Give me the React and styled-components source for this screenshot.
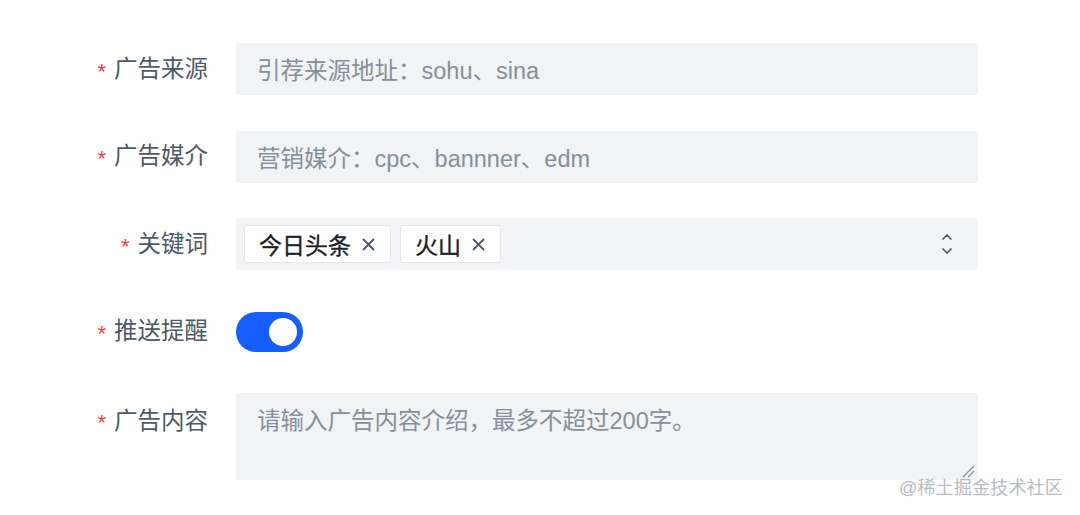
import React from 'react';
import styled, { createGlobalStyle } from 'styled-components';

const GlobalStyle = createGlobalStyle`
  html, body {
    margin: 0;
    padding: 0;
    background: #ffffff;
  }
  body {
    font-family: "Liberation Sans", "Noto Sans CJK SC", sans-serif;
  }
`;

const Page = styled.div`
  position: relative;
  width: 1080px;
  height: 515px;
  overflow: hidden;
  background: #fff;
`;

const Form = styled.form`
  display: grid;
  grid-template-columns: 208px 742px;
  column-gap: 28px;
  row-gap: 35.5px;
  padding-top: 43px;
`;

const Label = styled.label`
  display: flex;
  align-items: ${({ $top }) => ($top ? 'flex-start' : 'center')};
  justify-content: flex-end;
  height: ${({ $top }) => ($top ? 'auto' : '52px')};
  padding-top: ${({ $top }) => ($top ? '12px' : '0')};
  font-size: 23.5px;
  color: #4e5969;
  line-height: 1.4;
`;

const Star = styled.span`
  color: #f53f3f;
  font-size: 22px;
  margin-right: 8px;
  position: relative;
  top: 3px;
`;

const Field = styled.div`
  display: flex;
  align-items: center;
  height: 52px;
  background: #f2f3f5;
  border-radius: 3px;
  padding: 0 21px;
  font-size: 23.5px;
  color: #86909c;
  box-sizing: border-box;
`;

const TagField = styled(Field)`
  padding: 0 24px 0 8px;
  gap: 9px;
`;

const Tag = styled.span`
  display: inline-flex;
  align-items: center;
  gap: 10px;
  height: 38px;
  padding: 0 14px;
  box-sizing: border-box;
  background: #fff;
  border: 1px solid #e5e6eb;
  border-radius: 3px;
  font-size: 23px;
  color: #1d2129;
`;

const TagText = styled.span`
  -webkit-text-stroke: 0.35px #1d2129;
`;

const Close = styled.span`
  display: inline-flex;
  color: #4e5969;
`;

const Arrows = styled.span`
  margin-left: auto;
  display: inline-flex;
  color: #4e5969;
`;

const SwitchRow = styled.div`
  display: flex;
  align-items: center;
  height: 52px;
`;

const Switch = styled.div`
  width: 67px;
  height: 40px;
  border-radius: 20px;
  background: #165dff;
  display: flex;
  align-items: center;
  justify-content: flex-end;
  padding: 0 6px;
  box-sizing: border-box;
`;

const Knob = styled.span`
  width: 28px;
  height: 28px;
  border-radius: 50%;
  background: #fff;
`;

const TextArea = styled.div`
  position: relative;
  height: 87px;
  background: #f2f3f5;
  border-radius: 3px;
  padding: 11px 21px;
  box-sizing: border-box;
  font-size: 23.5px;
  line-height: 1.5;
  color: #86909c;
`;

const Resize = styled.svg`
  position: absolute;
  right: 3px;
  bottom: 2px;
`;

const Watermark = styled.div`
  position: absolute;
  right: 17px;
  bottom: 16px;
  font-size: 18px;
  color: #b8bcc4;
  letter-spacing: 0.2px;
`;

const XIcon = () => (
  <svg width="15" height="15" viewBox="0 0 15 15" fill="none" stroke="currentColor" strokeWidth="1.8">
    <path d="M2 2L13 13M13 2L2 13" />
  </svg>
);

const Required = ({ children, top }) => (
  <Label $top={top}>
    <Star>*</Star>
    {children}
  </Label>
);

const App = () => {
  return (
    <Page>
      <GlobalStyle />
      <Form>
        <Required>广告来源</Required>
        <Field>引荐来源地址：sohu、sina</Field>

        <Required>广告媒介</Required>
        <Field>营销媒介：cpc、bannner、edm</Field>

        <Required>关键词</Required>
        <TagField>
          <Tag>
            <TagText>今日头条</TagText>
            <Close><XIcon /></Close>
          </Tag>
          <Tag>
            <TagText>火山</TagText>
            <Close><XIcon /></Close>
          </Tag>
          <Arrows>
            <svg width="14" height="26" viewBox="0 0 14 26" fill="none" stroke="currentColor" strokeWidth="1.7" strokeLinecap="round" strokeLinejoin="round">
              <path d="M3 8L7 4L11 8" />
              <path d="M3 18L7 22L11 18" />
            </svg>
          </Arrows>
        </TagField>

        <Required>推送提醒</Required>
        <SwitchRow>
          <Switch><Knob /></Switch>
        </SwitchRow>

        <Required top>广告内容</Required>
        <TextArea>
          请输入广告内容介绍，最多不超过200字。
          <Resize width="14" height="14" viewBox="0 0 14 14" fill="none" stroke="#86909c" strokeWidth="1.2">
            <path d="M2 13L13 2M7 13L13 7" />
          </Resize>
        </TextArea>
      </Form>
      <Watermark>@稀土掘金技术社区</Watermark>
    </Page>
  );
};

export default App;
